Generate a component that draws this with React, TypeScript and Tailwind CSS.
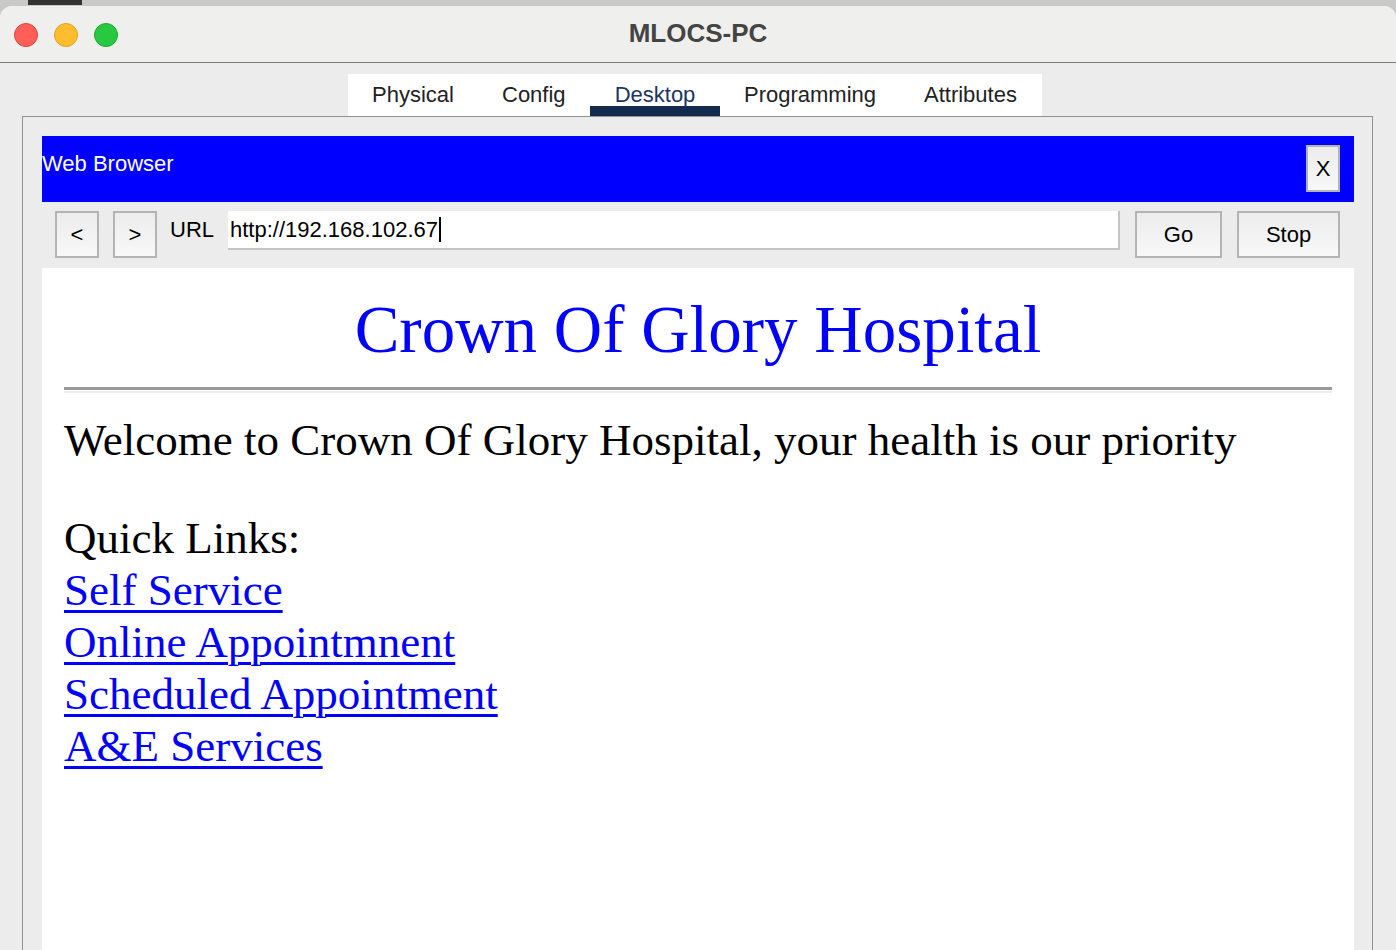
const links = ['Self Service', 'Online Appointmnent', 'Scheduled Appointment', 'A&E Services']

function ToolButton({ label, className }: { label: string; className: string }) {
  return (
    <div
      className={`flex items-center justify-center border-2 border-[#b4b4b4] bg-gradient-to-b from-[#ececec] to-[#f8f8f8] text-[22px] text-black ${className}`}
    >
      {label}
    </div>
  )
}

export default function App() {
  return (
    <div className="flex h-[950px] w-[1396px] flex-col overflow-hidden bg-[#c9c9c9] font-['Liberation_Sans',Arial,sans-serif]">
      {/* strip of the window behind */}
      <div className="flex h-[6px] shrink-0">
        <div className="ml-[28px] h-[5px] w-[54px] bg-[#333333]" />
      </div>

      <div className="flex flex-1 flex-col overflow-hidden rounded-t-[12px] bg-[#ececec]">
        {/* title bar */}
        <div className="relative flex h-[57px] shrink-0 items-center border-b border-[#7c7c7c] bg-[#efefee]">
          <div className="flex items-center gap-[16px] pl-[14px] pt-[1px]">
            <span className="h-[24px] w-[24px] rounded-full border border-[#e0443e] bg-[#ff5f57]" />
            <span className="h-[24px] w-[24px] rounded-full border border-[#dea123] bg-[#febc2e]" />
            <span className="h-[24px] w-[24px] rounded-full border border-[#1aab29] bg-[#28c840]" />
          </div>
          <div className="absolute inset-x-0 top-[12px] text-center text-[26px] font-bold leading-[30px] text-[#444444]">
            MLOCS-PC
          </div>
        </div>

        {/* tabs */}
        <div className="flex shrink-0 pl-[348px] pt-[11px]">
          <div className="flex h-[42px] w-[694px] items-stretch bg-white text-[22px] leading-[26px] text-[#222222]">
            <div className="w-[154px] pl-[24px] pt-[8px]">Physical</div>
            <div className="w-[88px] pt-[8px]">Config</div>
            <div className="flex w-[130px] justify-center border-b-[10px] border-[#112a4e] pt-[8px] text-[#1d3564]">
              Desktop
            </div>
            <div className="w-[204px] pl-[24px] pt-[8px]">Programming</div>
            <div className="flex-1 pt-[8px]">Attributes</div>
          </div>
        </div>

        {/* device panel */}
        <div className="ml-[22px] flex w-[1351px] flex-1 flex-col border-x border-t border-[#919191] pl-[19px] pr-[18px] pt-[19px]">
          {/* blue header */}
          <div className="flex h-[66px] shrink-0 items-start justify-between bg-[#0000ff]">
            <span className="pt-[14px] text-[22px] leading-[28px] text-white">Web Browser</span>
            <ToolButton label="X" className="mr-[14px] mt-[9px] h-[47px] w-[34px]" />
          </div>

          {/* url toolbar */}
          <div className="flex h-[66px] shrink-0 items-start pt-[9px]">
            <ToolButton label="<" className="ml-[13px] h-[47px] w-[44px]" />
            <ToolButton label=">" className="ml-[14px] h-[47px] w-[44px]" />
            <span className="ml-[13px] pt-[6px] text-[22px] leading-[26px] text-black">URL</span>
            <div className="ml-[14px] flex h-[39px] w-[892px] items-center border-b-2 border-r-2 border-[#c4c4c4] bg-white pl-[2px] text-[22px] text-black">
              http://192.168.102.67
              <span className="ml-[1px] h-[25px] w-[2px] bg-black" />
            </div>
            <ToolButton label="Go" className="ml-[15px] h-[47px] w-[87px]" />
            <ToolButton label="Stop" className="ml-[15px] h-[47px] w-[103px]" />
          </div>

          {/* page content */}
          <div className="flex-1 bg-white px-[22px] font-['Liberation_Serif','Times_New_Roman',serif]">
            <h1 className="pt-[22px] text-center text-[67px] leading-[78px] text-[#0000ff]">
              Crown Of Glory Hospital
            </h1>
            <div className="mt-[19px] h-[6px] border-t-[3px] border-b-2 border-t-[#9a9a9a] border-b-[#eeeeee]" />
            <p className="mt-[21px] text-[45px] leading-[52px] text-black">
              Welcome to Crown Of Glory Hospital, your health is our priority
            </p>
            <div className="mt-[46px] text-[45px] leading-[52px]">
              <div className="text-black">Quick Links:</div>
              {links.map((l) => (
                <div key={l}>
                  <a href="#" className="text-[#0000ff] underline decoration-[3px] underline-offset-[5px]">
                    {l}
                  </a>
                </div>
              ))}
            </div>
          </div>
        </div>
      </div>
    </div>
  )
}
